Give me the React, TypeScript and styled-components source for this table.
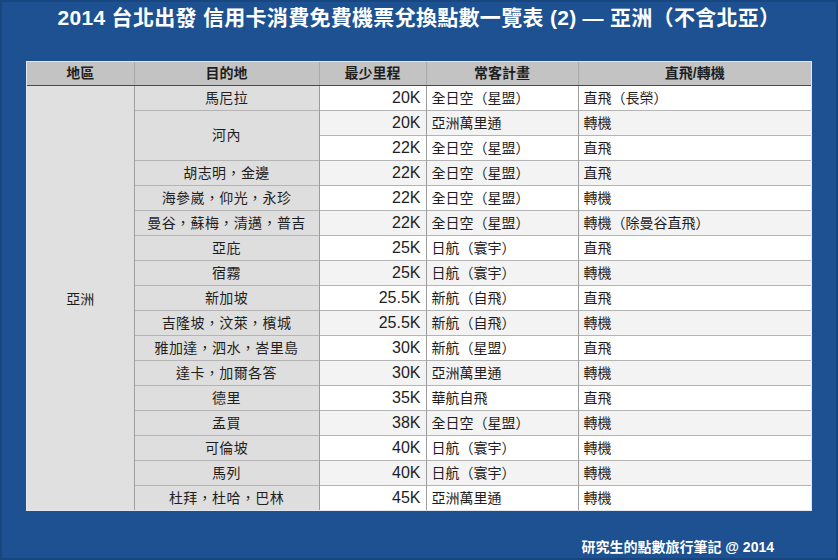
import { FC } from "react";
import styled, { createGlobalStyle } from "styled-components";

const GlobalStyle = createGlobalStyle`
  html, body {
    margin: 0;
    padding: 0;
    background: #1d5191;
  }
`;

const Frame = styled.div`
  width: 838px;
  height: 560px;
  box-sizing: border-box;
  background: #1d5191;
  box-shadow: inset 0 0 0 2px #18477f;
  display: flex;
  flex-direction: column;
  align-items: center;
  font-family: "Liberation Sans", "Noto Sans CJK TC", sans-serif;
`;

const Title = styled.h1`
  margin: 0;
  height: 36px;
  line-height: 36px;
  font-size: 21px;
  font-weight: bold;
  color: #ffffff;
  letter-spacing: 0.3px;
`;

const Table = styled.table`
  margin-top: 26px;
  width: 784px;
  border-collapse: collapse;
  table-layout: fixed;
  font-size: 14px;
  color: #1e1e1e;
  background: #ffffff;
  outline: 1px solid #e4e8ee;
`;

const HeadCell = styled.th<{ $w: number }>`
  width: ${(p) => p.$w}px;
  height: 23px;
  padding: 0;
  background: #c3c3c3;
  font-weight: bold;
  text-align: center;
  border-left: 1px solid #a9a9a9;
  border-bottom: 1px solid #4a4a4a;
  box-sizing: border-box;
  line-height: 22px;
  &:first-child {
    border-left: none;
  }
`;

const Row = styled.tr`
  height: 25px;
  &:nth-child(even) td.data {
    background: #f3f3f3;
  }
`;

const Cell = styled.td<{ $align?: "left" | "right" | "center"; $shade?: string; $size?: number; $spacing?: number }>`
  padding: 0 5px;
  line-height: 24px;
  font-size: ${(p) => p.$size || 14}px;
  letter-spacing: ${(p) => p.$spacing || 0}px;
  text-align: ${(p) => p.$align || "left"};
  background: ${(p) => p.$shade || "#ffffff"};
  border-top: 1px solid #b4b4b4;
  border-left: 1px solid #9c9c9c;
  white-space: nowrap;
  overflow: hidden;
`;

const RegionCell = styled.td`
  background: #e0e0e0;
  text-align: center;
  vertical-align: middle;
  border-right: 1px solid #a0a0a0;
  padding: 0;
`;

const Footer = styled.div`
  margin-top: auto;
  margin-bottom: 3px;
  align-self: flex-end;
  margin-right: 64px;
  line-height: 20px;
  font-size: 14px;
  font-weight: bold;
  color: #ffffff;
`;

type Line = {
  city?: string;
  span?: number;
  miles: string;
  program: string;
  route: string;
};

const rows: Line[] = [
  { city: "馬尼拉", miles: "20K", program: "全日空（星盟）", route: "直飛（長榮）" },
  { city: "河內", span: 2, miles: "20K", program: "亞洲萬里通", route: "轉機" },
  { miles: "22K", program: "全日空（星盟）", route: "直飛" },
  { city: "胡志明，金邊", miles: "22K", program: "全日空（星盟）", route: "直飛" },
  { city: "海參崴，仰光，永珍", miles: "22K", program: "全日空（星盟）", route: "轉機" },
  { city: "曼谷，蘇梅，清邁，普吉", miles: "22K", program: "全日空（星盟）", route: "轉機（除曼谷直飛）" },
  { city: "亞庇", miles: "25K", program: "日航（寰宇）", route: "直飛" },
  { city: "宿霧", miles: "25K", program: "日航（寰宇）", route: "轉機" },
  { city: "新加坡", miles: "25.5K", program: "新航（自飛）", route: "直飛" },
  { city: "吉隆坡，汶萊，檳城", miles: "25.5K", program: "新航（自飛）", route: "轉機" },
  { city: "雅加達，泗水，峇里島", miles: "30K", program: "新航（星盟）", route: "直飛" },
  { city: "達卡，加爾各答", miles: "30K", program: "亞洲萬里通", route: "轉機" },
  { city: "德里", miles: "35K", program: "華航自飛", route: "直飛" },
  { city: "孟買", miles: "38K", program: "全日空（星盟）", route: "轉機" },
  { city: "可倫坡", miles: "40K", program: "日航（寰宇）", route: "轉機" },
  { city: "馬列", miles: "40K", program: "日航（寰宇）", route: "轉機" },
  { city: "杜拜，杜哈，巴林", miles: "45K", program: "亞洲萬里通", route: "轉機" },
];

const App: FC = () => {
  return (
    <Frame>
      <GlobalStyle />
      <Title>2014 台北出發 信用卡消費免費機票兌換點數一覽表 (2) — 亞洲（不含北亞）</Title>
      <Table>
        <thead>
          <tr>
            <HeadCell $w={107}>地區</HeadCell>
            <HeadCell $w={185}>目的地</HeadCell>
            <HeadCell $w={107}>最少里程</HeadCell>
            <HeadCell $w={152}>常客計畫</HeadCell>
            <HeadCell $w={233}>直飛/轉機</HeadCell>
          </tr>
        </thead>
        <tbody>
          {rows.map((r, i) => (
            <Row key={i}>
              {i === 0 && <RegionCell rowSpan={rows.length}>亞洲</RegionCell>}
              {r.city && (
                <Cell $align="center" $shade="#dedede" $spacing={0.4} rowSpan={r.span || 1}>
                  {r.city}
                </Cell>
              )}
              <Cell className="data" $align="right" $size={16}>{r.miles}</Cell>
              <Cell className="data">{r.program}</Cell>
              <Cell className="data">{r.route}</Cell>
            </Row>
          ))}
        </tbody>
      </Table>
      <Footer>研究生的點數旅行筆記 @ 2014</Footer>
    </Frame>
  );
};

export default App;
